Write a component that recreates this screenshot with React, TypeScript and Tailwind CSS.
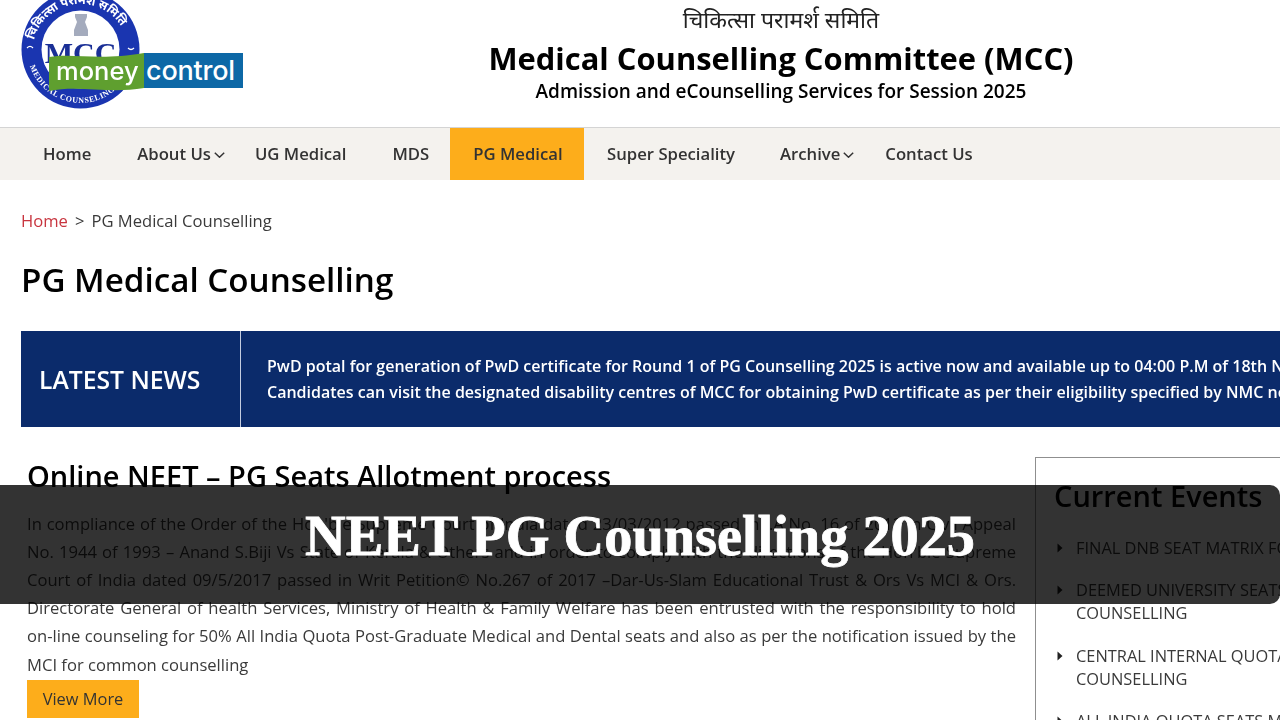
const NAV = [
  { label: "Home", cls: "pl-[23px] pr-[23px]" },
  { label: "About Us", cls: "pl-[23px] pr-[7px]", caret: true },
  { label: "UG Medical", cls: "pl-[23px] pr-[23px]" },
  { label: "MDS", cls: "pl-[23px] pr-[21px]" },
  { label: "PG Medical", cls: "pl-[23px] pr-[21.5px] bg-[#fdad1b]" },
  { label: "Super Speciality", cls: "pl-[23px] pr-[22px]" },
  { label: "Archive", cls: "pl-[23px] pr-[8px]", caret: true },
  { label: "Contact Us", cls: "pl-[23px] pr-[23px]" },
];

const BODY = [
  "In compliance of the Order of the Hon'ble Supreme Court of India dated 23/03/2012 passed in I.A No. 16 of 2012 in Civil Appeal",
  "No. 1944 of 1993 – Anand S.Biji Vs State of Kerala & Others and in order to comply with the directions of the Hon'ble Supreme",
  "Court of India dated 09/5/2017 passed in Writ Petition© No.267 of 2017 –Dar-Us-Slam Educational Trust & Ors Vs MCI & Ors.",
  "Directorate General of health Services, Ministry of Health & Family Welfare has been entrusted with the responsibility to hold",
  "on-line counseling for 50% All India Quota Post-Graduate Medical and Dental seats and also as per the notification issued by the",
];

const EVENTS = [
  { lines: ["FINAL DNB SEAT MATRIX FOR ROUND 1"], cls: "h-[42px]" },
  { lines: ["DEEMED UNIVERSITY SEATS FOR PG", "COUNSELLING"], cls: "h-[66px]" },
  { lines: ["CENTRAL INTERNAL QUOTA SEATS FOR PG", "COUNSELLING"], cls: "h-[65px]" },
  { lines: ["ALL INDIA QUOTA SEATS MATRIX"], cls: "h-[30px]" },
];

function Logo() {
  return (
    <div className="relative h-[127px] w-[243px] shrink-0 blur-[0.5px]">
      <svg width="122" height="112" viewBox="0 0 122 112" className="absolute left-[20px] top-0" aria-hidden>
        <circle cx="60.5" cy="49.5" r="59" fill="#1a35b0" />
        <circle cx="60.5" cy="49.5" r="39" fill="#fff" />
        <path d="M55 14h12v3l-2 5 3 8v6H54v-6l3-8-2-5z" fill="#a4abbd" />
        <path d="M7 48q3-3 6 0M108 48q3 3 6 0" fill="none" stroke="#fff" strokeWidth="1.2" />
        <text x="60.5" y="63" textAnchor="middle" fontFamily="'Liberation Serif', serif" fontWeight="700" fontSize="30" fill="#1a2f96">MCC</text>
        <path id="mcc-arc" d="M10 66 A53 53 0 0 0 111 66" fill="none" />
        <text fontFamily="'Liberation Serif', serif" fontWeight="700" fontSize="8" fill="#fff" letterSpacing="0.6">
          <textPath href="#mcc-arc">MEDICAL COUNSELING COMMITTEE</textPath>
        </text>
        <path id="mcc-top" d="M14 40 A48 48 0 0 1 107 40" fill="none" />
        <text fontFamily="'Noto Sans', sans-serif" fontWeight="700" fontSize="12" fill="#fff">
          <textPath href="#mcc-top">चिकित्सा परामर्श समिति</textPath>
        </text>
      </svg>
      <div className="absolute left-[144px] top-[53px] flex h-[35px] w-[99px] items-center bg-[#0d68a6] pl-[2px] font-['Inter',sans-serif] text-[27px] font-medium leading-none tracking-[-0.2px] text-white">
        control
      </div>
      <svg width="96" height="40" viewBox="0 0 96 40" className="absolute left-[49px] top-[53px]" aria-hidden>
        <path d="M0 4 C25 0 50 8 95 0 V35 C60 41 30 32 0 38 Z" fill="#5f9f2f" />
      </svg>
      <div className="absolute left-[56px] top-[56px] font-['Inter',sans-serif] text-[25.5px] font-medium leading-[30px] text-white">
        money
      </div>
    </div>
  );
}

function Caret() {
  return (
    <svg width="11" height="6" viewBox="0 0 11 6" className="ml-[3px] mt-[1px]" aria-hidden>
      <path d="M0.8 0.8L5.5 5.2L10.2 0.8" fill="none" stroke="#333" strokeWidth="1.5" />
    </svg>
  );
}

export default function App() {
  return (
    <div className="relative h-[720px] w-[1280px] overflow-hidden bg-white font-['Open_Sans',sans-serif] text-[#111]">
      <div className="blur-[0.3px]">
        <header className="flex h-[127px]">
          <Logo />
          <div className="flex flex-1 flex-col items-center pl-[39px] text-center">
            <div className="mt-[4px] font-['Noto_Sans',sans-serif] text-[23px] leading-[30px] text-[#222]">चिकित्सा परामर्श समिति</div>
            <h1 className="mt-[3px] text-[30.9px] font-bold leading-[42px] text-black">Medical Counselling Committee (MCC)</h1>
            <div className="-mt-[1px] text-[19px] font-semibold leading-[26px] text-black">Admission and eCounselling Services for Session 2025</div>
          </div>
        </header>

        <nav className="flex h-[53px] border-t border-[#d4d4d4] bg-[#f4f2ee] pl-[20px]">
          {NAV.map((item) => (
            <div
              key={item.label}
              className={`flex h-[52px] shrink-0 items-center whitespace-nowrap text-[16.7px] font-semibold text-[#333] ${item.cls}`}
            >
              {item.label}
              {item.caret && <Caret />}
            </div>
          ))}
        </nav>

        <main className="px-[21px]">
          <div className="mt-[29px] flex text-[16.6px] leading-[24px] text-[#3a3a3a]">
            <span className="text-[#c8353f]">Home</span>
            <span className="mx-[7px]">&gt;</span>
            <span>PG Medical Counselling</span>
          </div>
          <h2 className="mt-[25px] text-[33.2px] font-semibold leading-[44px] text-black">PG Medical Counselling</h2>

          <section className="mt-[29px] flex h-[96px] w-[1300px] bg-[#0b2b6b] text-white">
            <div className="flex w-[220px] shrink-0 items-center border-r border-[#c4cde0] pl-[18px] pt-[2px] text-[24.7px] font-semibold">LATEST NEWS</div>
            <div className="flex flex-col justify-center whitespace-nowrap pl-[26px] text-[16px] font-semibold leading-[26px]">
              <div>PwD potal for generation of PwD certificate for Round 1 of PG Counselling 2025 is active now and available up to 04:00 P.M of 18th November 2025.</div>
              <div>Candidates can visit the designated disability centres of MCC for obtaining PwD certificate as per their eligibility specified by NMC norms.</div>
            </div>
          </section>

          <div className="mt-[30px] flex">
            <article className="w-[995px] shrink-0 pl-[6px]">
              <h3 className="-mt-[1px] text-[29px] font-semibold leading-[40px] text-black">Online NEET – PG Seats Allotment process</h3>
              <div className="mt-[14px] text-[16.6px] leading-[28px] text-[#3a3a3a]">
                {BODY.map((line) => (
                  <div key={line} className="whitespace-nowrap [text-align-last:justify] [text-align:justify]">{line}</div>
                ))}
                <div className="mt-[1px]">MCI for common counselling</div>
              </div>
              <button className="mt-[1px] h-[38px] w-[112px] bg-[#fdad1b] text-[16.4px] text-[#333]">View More</button>
            </article>

            <aside className="ml-[19px] h-[300px] w-[300px] shrink-0 border-l border-t border-[#8f8f8f] pl-[18px] pt-[16px]">
              <h3 className="text-[29px] font-semibold leading-[44px] text-black">Current Events</h3>
              <ul className="mt-[18px] whitespace-nowrap text-[16.4px] leading-[23px] text-[#3a3a3a]">
                {EVENTS.map((e) => (
                  <li key={e.lines[0]} className={`relative pl-[22px] ${e.cls}`}>
                    <svg width="6" height="10" viewBox="0 0 6 10" className="absolute left-[3px] top-[7px]" aria-hidden>
                      <path d="M0.5 0.5L5.5 5L0.5 9.5Z" fill="#222" />
                    </svg>
                    {e.lines.map((l) => (
                      <div key={l}>{l}</div>
                    ))}
                  </li>
                ))}
              </ul>
            </aside>
          </div>
        </main>
      </div>

      <div className="absolute left-0 top-[485px] flex h-[119px] w-[1280px] items-center rounded-r-[10px] bg-[rgba(0,0,0,0.8)] pb-[16px] pl-[305px] font-['Liberation_Serif',serif] text-[56.3px] font-bold leading-none text-white [-webkit-text-stroke:0.8px_white]">
        NEET PG Counselling 2025
      </div>
    </div>
  );
}
